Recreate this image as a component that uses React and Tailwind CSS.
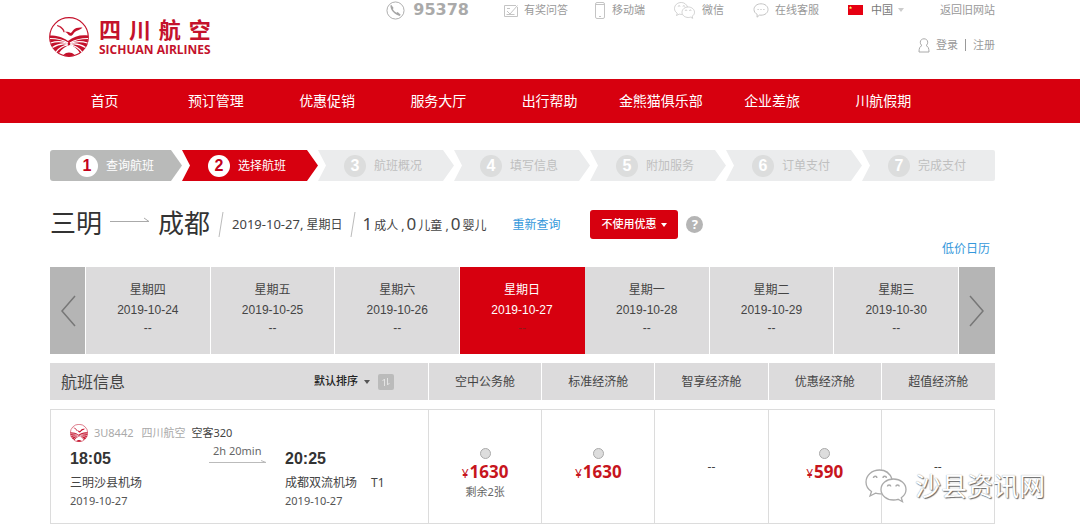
import React, { useState } from "react";

const NAV_ITEMS = [
  "首页",
  "预订管理",
  "优惠促销",
  "服务大厅",
  "出行帮助",
  "金熊猫俱乐部",
  "企业差旅",
  "川航假期",
];

const STEPS = [
  "查询航班",
  "选择航班",
  "航班概况",
  "填写信息",
  "附加服务",
  "订单支付",
  "完成支付",
];

const DAYS = [
  { week: "星期四", date: "2019-10-24" },
  { week: "星期五", date: "2019-10-25" },
  { week: "星期六", date: "2019-10-26" },
  { week: "星期日", date: "2019-10-27" },
  { week: "星期一", date: "2019-10-28" },
  { week: "星期二", date: "2019-10-29" },
  { week: "星期三", date: "2019-10-30" },
];

const CABINS = [
  { name: "空中公务舱", price: 1630, left: "剩余2张" },
  { name: "标准经济舱", price: 1630 },
  { name: "智享经济舱" },
  { name: "优惠经济舱", price: 590 },
  { name: "超值经济舱" },
];

function Emblem({ className }) {
  return (
    <svg viewBox="0 0 40 40" className={className} aria-hidden="true">
      <circle cx="20" cy="20" r="19.3" fill="#fff" stroke="#c4122c" strokeWidth="1.2" />
      {/* gulls */}
      <path
        d="M8 8.500c3 .3 5.200 1.800 6.700 4.300.5.900.6 1.600.3 2.400-.9-2.600-3.500-5.200-7-6.700z"
        fill="#c4122c"
        stroke="#c4122c"
        strokeWidth=".6"
      />
      <path
        d="M33.500 10.500c-3 .2-5.600 0-7.600 1.300-2 1.200-2.400 3-4.100 4.200-1.900-1.200-4-1.500-6.300-1.200 1.900.7 3.100 1.700 4.200 3.300 1.500 1 3.200.6 4.200-.7 1.200-1.500 2-2.900 3.900-3.700 2-.8 4-1.300 5.700-3.200z"
        fill="#c4122c"
      />
      {/* waves */}
      <path
        d="M1 18.500c7 0 12.500 1.500 18 5.500 6-4.500 12-6.500 20-5.500.5 7-2.500 13.500-8 17.500-3-4.500-6-7-10-8-4 1-8 3.500-11 8C4 32.500.5 26 1 18.500z"
        fill="#c4122c"
      />
      <g fill="none" stroke="#fff" strokeWidth="1.200">
        <path d="M1 21.500c7 0 13 1.200 18 4.500" />
        <path d="M1.500 26c6-1.800 12-1.800 17 .5" />
        <path d="M3.500 30.500c5-3.300 10-4.300 15-3.200" />
        <path d="M7 35c3.500-4.500 7.500-6.500 12-7.200" />
        <path d="M39 21.500c-7 0-13 1.200-18 4.500" />
        <path d="M38.500 26c-6-1.800-12-1.800-17 .5" />
        <path d="M36.500 30.500c-5-3.300-10-4.300-15-3.200" />
        <path d="M33 35c-3.500-4.500-7.500-6.500-12-7.200" />
      </g>
      <path d="M14 38.200c2-2 4-2.700 6-2.700s4 .7 6 2.700c-4 1.300-8 1.300-12 0z" fill="#c4122c" />
    </svg>
  );
}

function Caret({ className }) {
  return (
    <svg viewBox="0 0 6 4" className={className} aria-hidden="true">
      <path d="M0 0h6L3 4z" fill="currentColor" />
    </svg>
  );
}

function WechatIcon({ className, stroke = "#bbb" }) {
  return (
    <svg viewBox="0 0 42 34" className={className} fill="none" aria-hidden="true">
      <path
        d="M27 10C25 4.500 20.500 1 14.500 1 7 1 1 6.200 1 13c0 4 2 7.200 5.500 9.500L5 27l5.500-2.800c2 .6 4 .8 6.200.6"
        fill="#fff"
        stroke={stroke}
        strokeWidth="1.300"
      />
      <path
        d="M28.500 10c-7 0-12.500 4.700-12.500 10.500S21.500 31 28.500 31c1.600 0 3-.2 4.500-.7l4.500 2.400-1.200-4c3-2 4.700-5 4.700-8.200C41 14.700 35.500 10 28.500 10z"
        fill="#fff"
        stroke={stroke}
        strokeWidth="1.300"
      />
      <g stroke={stroke} strokeWidth="1.500">
        <path d="M8.500 9a1.700 1.700 0 0 1 3.400 0M18 9a1.700 1.700 0 0 1 3.400 0" />
        <path d="M22.500 17.500a1.600 1.600 0 0 1 3.200 0M31 17.500a1.600 1.600 0 0 1 3.200 0" />
      </g>
    </svg>
  );
}

function TopLinks() {
  return (
    <div className="flex h-5 items-center justify-end text-[11px] text-[#999]">
      <a href="#tel" className="mr-[34px] flex items-center gap-2">
        <svg viewBox="0 0 20 20" className="size-[19px]" fill="none" aria-hidden="true">
          <circle cx="10" cy="10" r="9" stroke="#aaa" />
          <path
            d="M5.500 4 8 7.300 7.200 8.500c.9 1.800 2.200 3 3.900 3.900l1.200-.7 3.200 2.800-1.200 1.200C9.500 14.500 5 10.500 4.600 5z"
            fill="#a5a5a5"
          />
        </svg>
        <span className="font-['DejaVu_Sans',sans-serif] text-base font-bold text-[#aaa]">95378</span>
      </a>
      <a href="#quiz" className="mr-[27px] flex items-center gap-[5px]">
        <svg viewBox="0 0 16 16" className="size-4" fill="none" stroke="#c4c4c4" aria-hidden="true">
          <path d="M1.500 3.500h11.500M14.500 5v9.500h-13v-11M4 6.500h3M4 9l3 3 7.500-8.500M3.500 12.500h8" />
        </svg>
        有奖问答
      </a>
      <a href="#mobile" className="mr-[29px] flex items-center gap-[7px]">
        <svg viewBox="0 0 10 17" className="h-[17px] w-2.5" fill="none" stroke="#c4c4c4" aria-hidden="true">
          <rect x=".5" y=".5" width="9" height="16" rx="1.500" />
          <path d="M1 2.500h8M4 14.500h2" />
        </svg>
        移动端
      </a>
      <a href="#wechat" className="mr-[29px] flex items-center gap-[7px]">
        <WechatIcon className="h-[17px] w-[21px]" />
        微信
      </a>
      <a href="#service" className="mr-[29px] flex items-center gap-[6px]">
        <svg viewBox="0 0 16 15" className="h-[15px] w-4" fill="none" stroke="#c4c4c4" aria-hidden="true">
          <path d="M8 .8c4 0 7 2.400 7 5.700s-3 5.700-7 5.700l-1.500-.1L4 14.200l.2-2.800C2.300 10.400 1 8.600 1 6.500 1 3.200 4 .8 8 .8z" />
          <path d="M4.500 6.500h1.200M7.400 6.500h1.200M10.300 6.500h1.200" />
        </svg>
        在线客服
      </a>
      <label className="mr-9 flex items-center">
        <svg viewBox="0 0 15 10" className="mr-2 h-2.5 w-[15px]" aria-hidden="true">
          <path d="M0 0h15v10H0z" fill="#e60012" />
          <path d="m2.500 1 .5 1.200h1.200l-1 .8.400 1.200-1.100-.7-1.100.7.400-1.200-1-.8H2z" fill="#ff6" />
        </svg>
        <select aria-label="国家" className="mr-[5px] appearance-none bg-transparent text-[#777]">
          <option>中国</option>
        </select>
        <Caret className="h-1 w-1.5 text-[#ccc]" />
      </label>
      <a href="#old">返回旧网站</a>
    </div>
  );
}

function Header() {
  return (
    <header className="flex items-start justify-between pr-[85px] pb-[22px] pl-[49px]">
      <a href="#home" className="mt-[17px] flex shrink-0 items-center gap-2.5">
        <Emblem className="size-10" />
        <span className="block text-[#c4122c]">
          <span className="flex justify-between text-[22px] leading-[25px] font-bold">
            <span>四</span>
            <span>川</span>
            <span>航</span>
            <span>空</span>
          </span>
          <span className="block font-['Open_Sans',sans-serif] text-xs leading-[15px] font-bold whitespace-nowrap">
            SICHUAN AIRLINES
          </span>
        </span>
      </a>
      <div>
        <TopLinks />
        <div className="mt-[15px] flex h-5 items-center justify-end text-[11px] text-[#999]">
          <svg viewBox="0 0 12 15" className="mr-1.5 h-[15px] w-3" fill="none" stroke="#aaa" aria-hidden="true">
            <path d="M4 7.500C2.700 6.800 2.300 5.500 2.300 4.200 2.300 2 4 .8 6 .8s3.700 1.200 3.700 3.400c0 1.300-.4 2.600-1.700 3.300M4 7.500C2 8.300 1 10 1 14h10c0-4-1-5.700-3-6.500" />
          </svg>
          <a href="#login">登录</a>
          <span className="mx-[7px] h-3 w-px bg-[#999]" />
          <a href="#register">注册</a>
        </div>
      </div>
    </header>
  );
}

function stepStyle(i) {
  if (i === 0)
    return "rounded-l-[3px] bg-[#b9bab9] text-white [clip-path:polygon(0_0,calc(100%-11px)_0,100%_50%,calc(100%-11px)_100%,0_100%)]";
  const shape =
    i === STEPS.length - 1
      ? "rounded-r-[2px] [clip-path:polygon(0_0,100%_0,100%_100%,0_100%,8px_50%)]"
      : "[clip-path:polygon(0_0,calc(100%-11px)_0,100%_50%,calc(100%-11px)_100%,0_100%,8px_50%)]";
  return `${shape} ${i === 1 ? "bg-[#d7000f] text-white" : "bg-[#ebeced] text-[#bfbfbf]"}`;
}

function Steps() {
  return (
    <ol className="mt-[27px] grid grid-cols-[132fr_repeat(5,136fr)_133fr]">
      {STEPS.map((step, i) => (
        <li key={step} className={`flex h-[31px] items-center gap-2 pl-[26px] text-xs ${stepStyle(i)}`}>
          <span
            className={`flex size-[22px] items-center justify-center rounded-full font-['Liberation_Sans',sans-serif] text-base font-bold ${
              i < 2 ? "bg-white text-[#c4001a]" : "bg-[#dcdddd] text-white"
            }`}
          >
            {i + 1}
          </span>
          {step}
        </li>
      ))}
    </ol>
  );
}

function Slash({ className }) {
  return (
    <svg viewBox="0 0 6 27" className={`h-[27px] w-1.5 ${className}`} aria-hidden="true">
      <path d="M5 1 1 26" stroke="#bbb" fill="none" />
    </svg>
  );
}

function Summary() {
  return (
    <div className="mt-[29px] flex h-[29px] items-center text-xs whitespace-nowrap text-[#444]">
      <h1 className="flex items-center pb-[3px] text-[26px] leading-[26px] text-[#333]">
        三明
        <svg viewBox="0 0 40 10" className="mx-2 mb-1 h-2.5 w-10" fill="none" stroke="#aaa" aria-hidden="true">
          <path d="M0 5.500h39L34 2" />
        </svg>
        成都
      </h1>
      <Slash className="mx-2" />
      <span>
        <span className="text-[13px]">2019-10-27,</span> 星期日
      </span>
      <Slash className="mx-[7px]" />
      <span className="flex items-baseline gap-[2px]">
        <span className="text-[17px]">1</span>成人 , <span className="text-[17px]">0</span>儿童 ,
        <span className="text-[17px]">0</span>婴儿
      </span>
      <a href="#search" className="ml-[26px] text-[#3498db]">
        重新查询
      </a>
      <label className="ml-[30px] flex h-[29px] w-[88px] items-center justify-center gap-[5px] rounded-[3px] bg-[#d7000f] text-[11px] font-medium text-white">
        <select aria-label="优惠" className="appearance-none bg-transparent">
          <option>不使用优惠</option>
        </select>
        <Caret className="h-1 w-1.5" />
      </label>
      <button
        type="button"
        aria-label="帮助"
        className="ml-2 flex size-[17px] items-center justify-center rounded-full bg-[#b5b5b5] text-[13px] font-bold text-white"
      >
        ?
      </button>
    </div>
  );
}

function DateBar() {
  const [active, setActive] = useState(3);

  return (
    <div className="mt-2 grid grid-cols-[36px_repeat(7,1fr)_36px] font-['Liberation_Sans','Noto_Sans_CJK_SC',sans-serif]">
      <button
        type="button"
        aria-label="前一周"
        className="flex items-center justify-center border-r border-white bg-[#b5b5b5]"
      >
        <svg viewBox="0 0 16 32" className="h-8 w-4" fill="none" stroke="#777" strokeWidth="1.500" aria-hidden="true">
          <path d="M15 1 2 16l13 15" />
        </svg>
      </button>
      {DAYS.map((day, i) => (
        <button
          key={day.date}
          type="button"
          onClick={() => setActive(i)}
          className={`flex h-[87px] flex-col items-center border-r pt-3.5 text-xs leading-[18px] ${
            i === active
              ? "border-[#d7000f] bg-[#d7000f] text-white"
              : "border-white bg-[#dcdbdc] text-[#444]"
          }`}
        >
          <span>{day.week}</span>
          <span className="mt-0.5">{day.date}</span>
          <span className={i === active ? "text-[#8e1a1a]" : ""}>--</span>
        </button>
      ))}
      <button type="button" aria-label="后一周" className="flex items-center justify-center bg-[#b5b5b5]">
        <svg viewBox="0 0 16 32" className="h-8 w-4" fill="none" stroke="#777" strokeWidth="1.500" aria-hidden="true">
          <path d="m1 1 13 15L1 31" />
        </svg>
      </button>
    </div>
  );
}

function FlightTable() {
  return (
    <table className="w-full table-fixed border-separate border-spacing-x-0 border-spacing-y-[9px] text-xs text-[#444]">
      <colgroup>
        <col className="w-[379px]" />
        {CABINS.map((cabin) => (
          <col key={cabin.name} />
        ))}
      </colgroup>
      <thead>
        <tr className="h-[37px] bg-[#dcdbdc]">
          <th className="border-r border-white p-0 text-left font-normal">
            <div className="flex items-center justify-between pr-[34px] pl-[11px]">
              <span className="text-base">航班信息</span>
              <span className="flex items-center text-[11px] font-medium text-[#222]">
                <select aria-label="排序" className="mr-1.5 appearance-none bg-transparent">
                  <option>默认排序</option>
                </select>
                <Caret className="mr-2 h-1 w-1.5 text-[#555]" />
                <button
                  type="button"
                  aria-label="切换升降序"
                  className="flex size-4 items-center justify-center rounded-xs bg-[#bbb]"
                >
                  <svg viewBox="0 0 8 8" className="size-2" fill="none" stroke="#e4e4e4" aria-hidden="true">
                    <path d="M2.500 8V1L.5 3M5.500 0v7l2-2" />
                  </svg>
                </button>
              </span>
            </div>
          </th>
          {CABINS.map((cabin) => (
            <th key={cabin.name} className="border-r border-white p-0 text-center font-normal last:border-r-0">
              {cabin.name}
            </th>
          ))}
        </tr>
      </thead>
      <tbody>
        <tr className="h-[115px]">
          <td className="border border-[#dcdcdc] p-0 align-top">
            <div className="pt-3.5 pl-[19px]">
              <div className="flex h-[18px] items-center text-[11px]">
                <Emblem className="mr-1.5 size-[18px]" />
                <span className="mr-2 text-[#aaa]">3U8442</span>
                <span className="mr-1.5 text-[#aaa]">四川航空</span>
                <span>空客320</span>
              </div>
              <div className="grid grid-cols-[139px_76px_1fr]">
                <div className="pt-1.5">
                  <p className="font-['Liberation_Sans',sans-serif] text-base leading-[22px] font-bold text-[#333]">
                    18:05
                  </p>
                  <p className="mt-1 leading-[18px]">三明沙县机场</p>
                  <p className="text-[11px] leading-[18px] text-[#555]">2019-10-27</p>
                </div>
                <div className="pt-0.5 text-[11px] leading-[14px] text-[#666]">
                  <p className="pl-1">2h 20min</p>
                  <svg viewBox="0 0 57 5" className="mt-px h-[5px] w-[57px]" fill="none" stroke="#bbb" aria-hidden="true">
                    <path d="M0 3.500h57M52 1.500l5 2" />
                  </svg>
                </div>
                <div className="pt-1.5">
                  <p className="font-['Liberation_Sans',sans-serif] text-base leading-[22px] font-bold text-[#333]">
                    20:25
                  </p>
                  <p className="mt-1 flex gap-3.5 leading-[18px]">
                    <span>成都双流机场</span>
                    <span>T1</span>
                  </p>
                  <p className="text-[11px] leading-[18px] text-[#555]">2019-10-27</p>
                </div>
              </div>
            </div>
          </td>
          {CABINS.map((cabin) =>
            cabin.price ? (
              <td key={cabin.name} className="border-y border-r border-[#dcdcdc] p-0 align-top">
                <label className="flex flex-col items-center pt-[38px]">
                  <input
                    type="radio"
                    name="cabin"
                    aria-label={cabin.name}
                    className="size-[11px] appearance-none rounded-full border border-[#aaa] bg-[#ddd] checked:bg-[#d7000f]"
                  />
                  <span className="mt-0.5 flex items-baseline gap-px leading-[22px] text-[#c7151d]">
                    <span className="text-xs">¥</span>
                    <span className="text-[17px] font-bold">{cabin.price}</span>
                  </span>
                  {cabin.left && <span className="text-[11px] leading-[18px] text-[#666]">{cabin.left}</span>}
                </label>
              </td>
            ) : (
              <td key={cabin.name} className="border-y border-r border-[#dcdcdc] p-0 text-center align-middle">
                --
              </td>
            )
          )}
        </tr>
      </tbody>
    </table>
  );
}

function App() {
  return (
    <div className="bg-white font-['Noto_Sans','Noto_Sans_CJK_SC',sans-serif]">
      <Header />
      <nav className="bg-[#d7000f] pr-[141px] pl-[49px]">
        <ul className="grid grid-cols-8">
          {NAV_ITEMS.map((item) => (
            <li key={item} className="text-center">
              <a href="#nav" className="block text-sm leading-[44px] whitespace-nowrap text-white">
                {item}
              </a>
            </li>
          ))}
        </ul>
      </nav>
      <main className="pr-[85px] pl-[50px]">
        <Steps />
        <Summary />
        <div className="pr-[5px] text-right text-xs leading-5">
          <a href="#calendar" className="text-[#3498db]">
            低价日历
          </a>
        </div>
        <DateBar />
        <div className="relative">
          <FlightTable />
          <div className="pointer-events-none absolute -right-[50px] bottom-[30px] flex items-center gap-2">
            <WechatIcon className="h-[34px] w-[42px]" stroke="#aaa" />
            <span className="text-[26px] leading-[34px] text-white [text-shadow:1px_1px_1px_#666,0_0_1px_#888]">
              沙县资讯网
            </span>
          </div>
        </div>
      </main>
    </div>
  );
}

export default App;
